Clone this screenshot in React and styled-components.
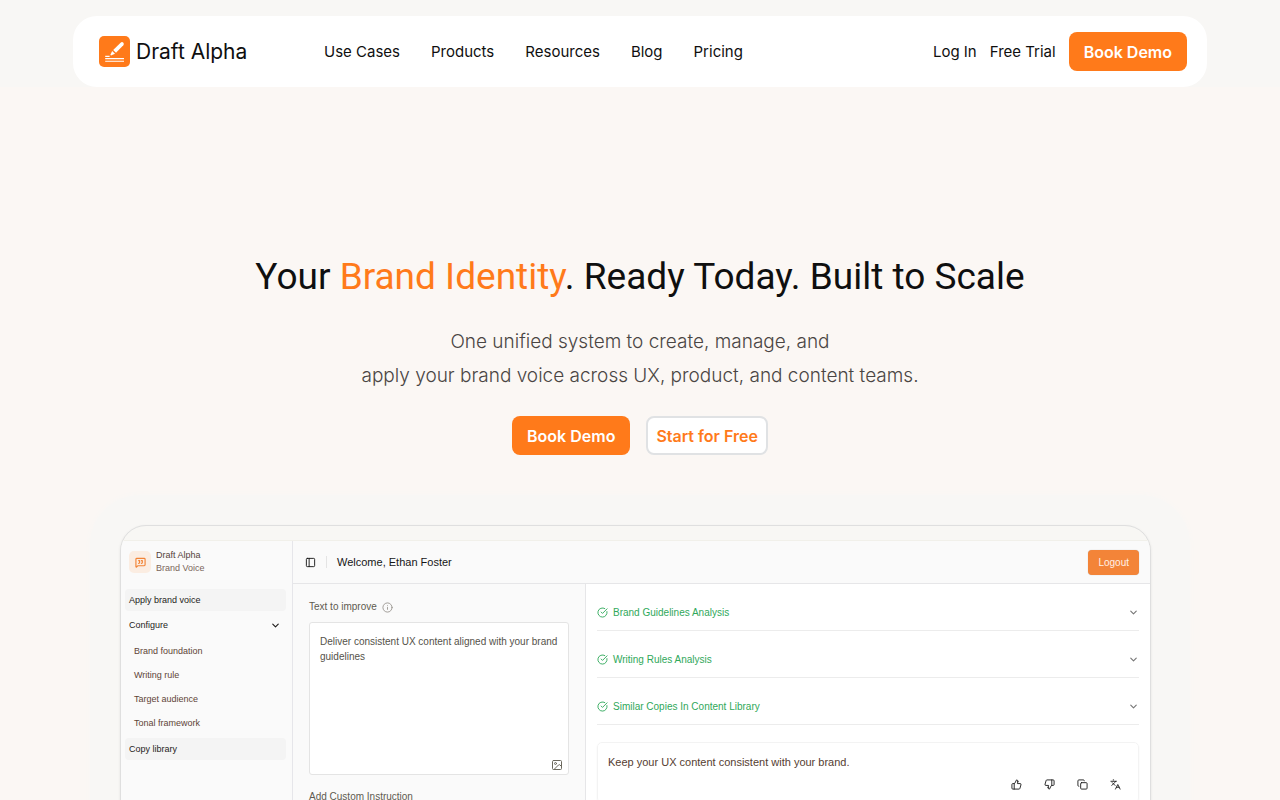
import React, { useState } from 'react'
import styled, { createGlobalStyle } from 'styled-components'
import {
  ChevronDown,
  CircleCheckBig,
  Copy,
  Image as ImageIcon,
  Info,
  Languages,
  MessageSquareQuote,
  PanelLeft,
  ThumbsDown,
  ThumbsUp,
} from 'lucide-react'

const GlobalStyle = createGlobalStyle`
  *, *::before, *::after {
    box-sizing: border-box;
  }
  body {
    margin: 0;
    background: #fbf7f4;
    color: #0f0f0f;
    font-family: Inter, "Liberation Sans", sans-serif;
  }
  h1, p, ul {
    margin: 0;
    padding: 0;
  }
  ul {
    list-style: none;
  }
  a {
    color: inherit;
    text-decoration: none;
  }
  button, textarea {
    font: inherit;
  }
`

const Page = styled.div`
  height: 100vh;
  overflow: auto;
  scrollbar-width: none;
`

const Header = styled.header`
  padding: 16px 73px 0;
  background: #f8f7f5;
`

const NavBar = styled.nav`
  display: flex;
  align-items: center;
  padding: 16px 20px 16px 26px;
  border-radius: 24px;
  background: #fff;
`

const Logo = styled.a`
  display: flex;
  align-items: center;
  gap: 6px;
  width: 225px;
  font-size: 21px;
  line-height: 30px;
`

const NavLinks = styled.ul`
  display: flex;
  flex: 1;
  gap: 31px;
  font-size: 15px;
`

const Account = styled.div`
  display: flex;
  align-items: center;
  gap: 13px;
  font-size: 15px;
`

const CtaButton = styled.button`
  height: 39px;
  padding: 0 ${p => (p.$outline ? '8px' : '15px')};
  border: ${p => (p.$outline ? '2px solid #e0e2e4' : '0')};
  border-radius: 8px;
  background: ${p => (p.$outline ? '#fff' : '#ff7a1a')};
  color: ${p => (p.$outline ? '#ff7a1a' : '#fff')};
  font-size: 16px;
  font-weight: 600;
  cursor: pointer;
`

const Hero = styled.section`
  display: flex;
  flex-direction: column;
  align-items: center;
  padding: 160px 24px 40px;
  text-align: center;
`

const Title = styled.h1`
  font-family: Roboto, Inter, sans-serif;
  font-size: 37px;
  font-weight: 400;
  line-height: 60px;
`

const Accent = styled.span`
  color: #ff7a1a;
`

const Lead = styled.p`
  margin-top: 18px;
  color: #4a4543;
  font-size: 19px;
  font-weight: 300;
  line-height: 34px;
`

const HeroActions = styled.div`
  display: flex;
  gap: 16px;
  margin-top: 23px;
`

const Preview = styled.section`
  max-width: 1100px;
  margin: 0 auto;
  padding: 30px 39px 30px 30px;
  border-radius: 50px;
  background: #f8f7f5;
  box-shadow: 0 0 6px #f8f7f5;
`

const Frame = styled.div`
  overflow: hidden;
  padding-top: 14px;
  border: 1px solid #dfdfdf;
  border-radius: 26px;
  background: #f8f7f4;
  box-shadow: 0 1px 3px rgba(0, 0, 0, 0.08);
`

const AppShell = styled.div`
  display: grid;
  grid-template-columns: 172px 1fr;
  border-top: 1px solid #f1f0ea;
  background: #fafafa;
  color: #5a4a42;
  font-family: "Liberation Sans", Arial, sans-serif;
  font-size: 10px;
`

const Sidebar = styled.aside`
  padding: 8px 6px 0 4px;
  border-right: 1px solid #e6e6ea;
  font-size: 9px;
`

const Brand = styled.div`
  display: flex;
  align-items: center;
  gap: 5px;
  padding: 0 4px;
  line-height: 13px;
  color: #54423a;
`

const BrandIcon = styled.span`
  display: flex;
  align-items: center;
  justify-content: center;
  width: 22px;
  height: 22px;
  border-radius: 5px;
  background: #fbede2;
  color: #f28437;
`

const BrandSub = styled.div`
  color: #7a665b;
`

const Menu = styled.ul`
  display: flex;
  flex-direction: column;
  gap: 3px;
  margin-top: 14px;
`

const MenuItem = styled.a`
  display: flex;
  align-items: center;
  justify-content: space-between;
  height: 22px;
  padding: 0 5px 0 4px;
  border-radius: 4px;
  background: ${p => (p.$filled ? '#f4f4f4' : 'transparent')};
  color: #1f1c1b;
`

const SubItem = styled.a`
  display: block;
  padding-left: 9px;
  line-height: 24px;
  color: #5f4437;
`

const TopBar = styled.div`
  display: flex;
  align-items: center;
  gap: 10px;
  height: 43px;
  padding: 0 11px 0 12px;
  border-bottom: 1px solid #e6e6e8;
  color: #161616;
  font-size: 11px;
`

const Divider = styled.span`
  width: 1px;
  height: 12px;
  background: #e4e4e4;
`

const Logout = styled.button`
  height: 25px;
  margin-left: auto;
  padding: 0 10px;
  border: 0;
  border-radius: 4px;
  background: #f38438;
  color: #fff0e6;
  font-size: 10px;
  box-shadow: 0 0 1px rgba(0, 0, 0, 0.3);
`

const Workspace = styled.div`
  display: grid;
  grid-template-columns: 293px 1fr;
`

const Editor = styled.div`
  padding: 16px 16px 24px;
  border-right: 1px solid #e6e6e8;
`

const FieldLabel = styled.label`
  display: flex;
  align-items: center;
  gap: 5px;
  line-height: 14px;
  color: #5f5a50;

  svg {
    color: #9a9690;
  }
`

const Field = styled.div`
  position: relative;
  margin: 8px 0 15px;
`

const TextArea = styled.textarea`
  display: block;
  width: 100%;
  height: 153px;
  padding: 11px 8px 11px 10px;
  border: 1px solid #e4e4e4;
  border-radius: 3px;
  outline: 0;
  background: #fff;
  color: #55524a;
  line-height: 15px;
  resize: none;
`

const IconButton = styled.button`
  display: flex;
  padding: 0;
  border: 0;
  background: none;
  color: #1c1c1c;
`

const AttachButton = styled(IconButton)`
  position: absolute;
  right: 6px;
  bottom: 4px;
  color: #6b685c;
`

const Results = styled.div`
  padding: 0 11px 24px;
  background: #fff;
`

const AnalysisRow = styled.button`
  display: flex;
  align-items: center;
  gap: 5px;
  width: 100%;
  height: 47px;
  padding: 11px 0 0;
  border: 0;
  border-bottom: 1px solid #ececec;
  background: none;
  color: #2fa85a;
  text-align: left;

  svg:last-child {
    margin-left: auto;
    color: #777;
  }
`

const ResultCard = styled.div`
  margin-top: 17px;
  padding: 12px 17px 12px 10px;
  border: 1px solid #f3f3f3;
  border-radius: 5px;
  color: #553d31;
  font-size: 11px;
  line-height: 14px;
  box-shadow: 0 1px 2px rgba(0, 0, 0, 0.05);
`

const CardActions = styled.div`
  display: flex;
  justify-content: flex-end;
  gap: 22px;
  margin-top: 10px;
`

const LogoMark = () => (
  <svg width="31" height="31" viewBox="0 0 31 31" aria-hidden="true">
    <rect x="0" y="0" width="31" height="31" rx="5" fill="#ff7a1a" />
    <path d="M14.2 14 21.6 6.7q1.5-1.3 2.7 0 1.2 1.3 0 2.6L17 16.8z" fill="#fff" />
    <path d="M13.2 14.9 16 17.7 12 19.4 11.4 18.8z" fill="#fff" />
    <path d="M6.2 20.4h4.4M6.2 22.6h18.8M6.2 25.2h18.8" stroke="#fff" strokeWidth="1.1" />
  </svg>
)

const navLinks = ['Use Cases', 'Products', 'Resources', 'Blog', 'Pricing']
const subItems = ['Brand foundation', 'Writing rule', 'Target audience', 'Tonal framework']
const analyses = [
  'Brand Guidelines Analysis',
  'Writing Rules Analysis',
  'Similar Copies In Content Library',
]
const cardActions = [
  { label: 'Like', Icon: ThumbsUp },
  { label: 'Dislike', Icon: ThumbsDown },
  { label: 'Copy', Icon: Copy },
  { label: 'Translate', Icon: Languages },
]

const SiteHeader = () => (
  <Header>
    <NavBar>
      <Logo href="#home">
        <LogoMark />
        Draft Alpha
      </Logo>
      <NavLinks>
        {navLinks.map(link => (
          <li key={link}>
            <a href={`#${link}`}>{link}</a>
          </li>
        ))}
      </NavLinks>
      <Account>
        <a href="#login">Log In</a>
        <a href="#trial">Free Trial</a>
        <CtaButton type="button">Book Demo</CtaButton>
      </Account>
    </NavBar>
  </Header>
)

const AppSidebar = () => (
  <Sidebar>
    <Brand>
      <BrandIcon>
        <MessageSquareQuote size={11} strokeWidth={2.5} />
      </BrandIcon>
      <div>
        Draft Alpha
        <BrandSub>Brand Voice</BrandSub>
      </div>
    </Brand>
    <Menu>
      <li>
        <MenuItem href="#apply" $filled>
          Apply brand voice
        </MenuItem>
      </li>
      <li>
        <MenuItem href="#configure">
          Configure
          <ChevronDown size={11} strokeWidth={2.5} />
        </MenuItem>
      </li>
      <li>
        <ul>
          {subItems.map(item => (
            <li key={item}>
              <SubItem href={`#${item}`}>{item}</SubItem>
            </li>
          ))}
        </ul>
      </li>
      <li>
        <MenuItem href="#library" $filled>
          Copy library
        </MenuItem>
      </li>
    </Menu>
  </Sidebar>
)

const EditorPane = () => {
  const [text, setText] = useState(
    'Deliver consistent UX content aligned with your brand guidelines',
  )
  return (
    <Editor>
      <FieldLabel htmlFor="improve">
        Text to improve
        <Info size={11} />
      </FieldLabel>
      <Field>
        <TextArea
          id="improve"
          spellCheck={false}
          value={text}
          onChange={e => setText(e.target.value)}
        />
        <AttachButton type="button" aria-label="Attach image">
          <ImageIcon size={12} />
        </AttachButton>
      </Field>
      <FieldLabel as="div">Add Custom Instruction</FieldLabel>
    </Editor>
  )
}

const ResultsPane = () => (
  <Results>
    {analyses.map(name => (
      <AnalysisRow key={name} type="button">
        <CircleCheckBig size={11} />
        {name}
        <ChevronDown size={11} strokeWidth={2.5} />
      </AnalysisRow>
    ))}
    <ResultCard>
      <p>Keep your UX content consistent with your brand.</p>
      <CardActions>
        {cardActions.map(({ label, Icon }) => (
          <IconButton key={label} type="button" aria-label={label}>
            <Icon size={11} />
          </IconButton>
        ))}
      </CardActions>
    </ResultCard>
  </Results>
)

const App = () => (
  <Page>
    <GlobalStyle />
    <SiteHeader />
    <main>
      <Hero>
        <Title>
          Your <Accent>Brand Identity</Accent>. Ready Today. Built to Scale
        </Title>
        <Lead>
          One unified system to create, manage, and
          <br />
          apply your brand voice across UX, product, and content teams.
        </Lead>
        <HeroActions>
          <CtaButton type="button">Book Demo</CtaButton>
          <CtaButton type="button" $outline>
            Start for Free
          </CtaButton>
        </HeroActions>
      </Hero>
      <Preview>
        <Frame>
          <AppShell>
            <AppSidebar />
            <div>
              <TopBar>
                <PanelLeft size={11} />
                <Divider />
                Welcome, Ethan Foster
                <Logout type="button">Logout</Logout>
              </TopBar>
              <Workspace>
                <EditorPane />
                <ResultsPane />
              </Workspace>
            </div>
          </AppShell>
        </Frame>
      </Preview>
    </main>
  </Page>
)

export default App
